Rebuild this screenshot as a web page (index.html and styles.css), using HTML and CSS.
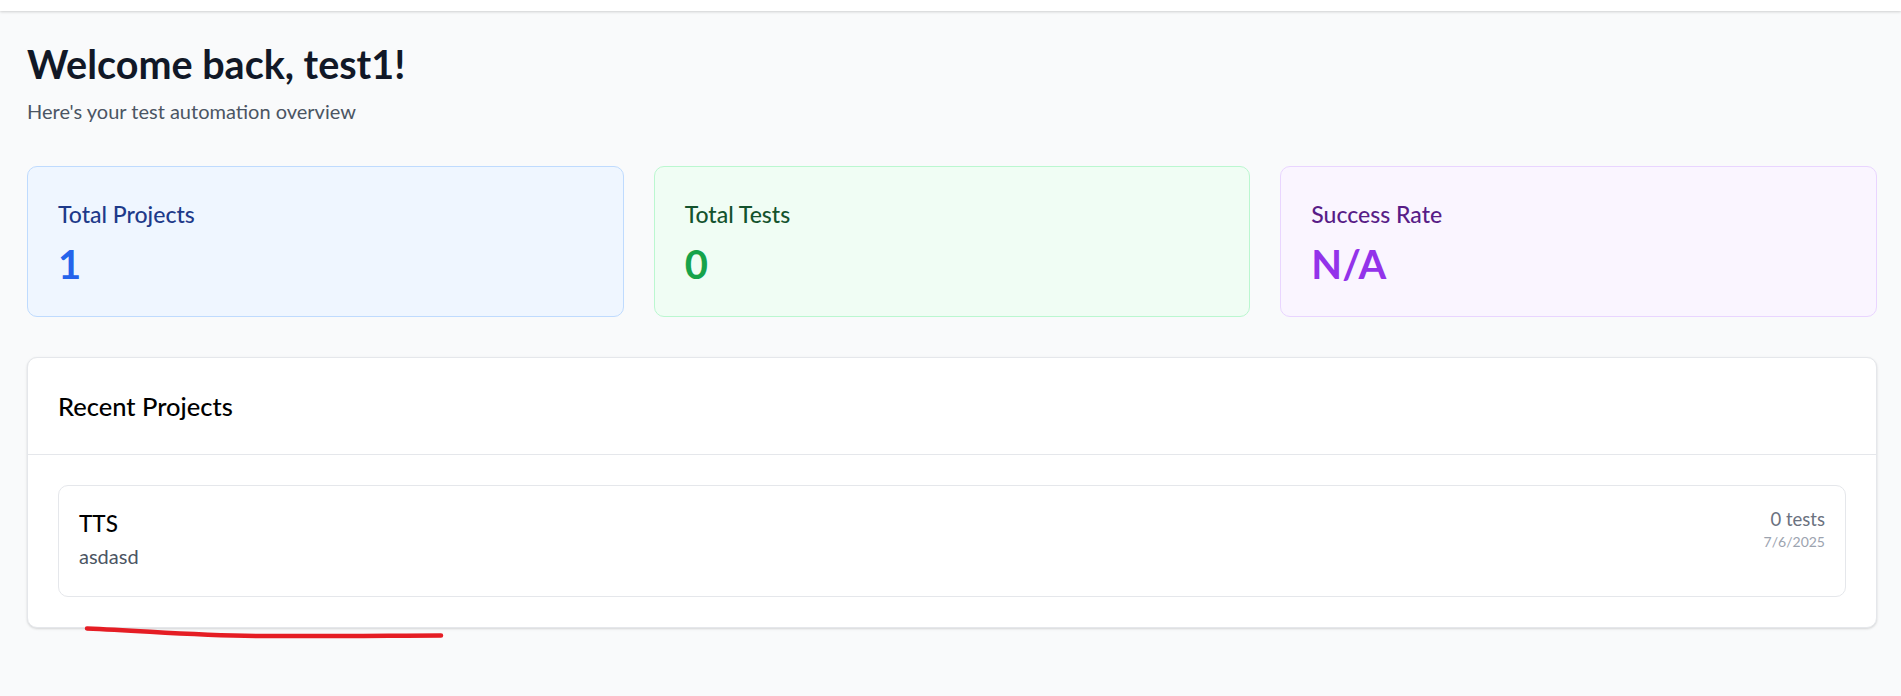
FILE: index.html
```html
<!DOCTYPE html>
<html lang="en">
<head>
<meta charset="utf-8">
<title>Dashboard</title>
<link rel="stylesheet" href="styles.css">
</head>
<body>
<header class="topbar"></header>
<main class="main">
  <section class="welcome">
    <h1 class="welcome-title">Welcome back, test1!</h1>
    <p class="welcome-sub">Here's your test automation overview</p>
  </section>
  <section class="stats">
    <div class="stat stat-blue">
      <div class="stat-label">Total Projects</div>
      <div class="stat-value">1</div>
    </div>
    <div class="stat stat-green">
      <div class="stat-label">Total Tests</div>
      <div class="stat-value">0</div>
    </div>
    <div class="stat stat-purple">
      <div class="stat-label">Success Rate</div>
      <div class="stat-value">N/A</div>
    </div>
  </section>
  <section class="panel">
    <div class="panel-head">
      <h2 class="panel-title">Recent Projects</h2>
    </div>
    <div class="panel-body">
      <div class="project">
        <div class="project-info">
          <div class="project-name">TTS</div>
          <div class="project-desc">asdasd</div>
        </div>
        <div class="project-meta">
          <div class="project-count">0 tests</div>
          <div class="project-date">7/6/2025</div>
        </div>
      </div>
    </div>
  </section>
</main>
<svg class="annotation" width="1901" height="696" viewBox="0 0 1901 696">
  <path d="M87 628.5 C 150 631, 190 635.5, 260 636 S 400 635.5, 441 635.5" fill="none" stroke="#e51d24" stroke-width="4.5" stroke-linecap="round"/>
</svg>
</body>
</html>
```
FILE: styles.css
```css
* { box-sizing: border-box; }
html, body { margin: 0; padding: 0; }
body {
  background: #f9fafb;
  font-family: Lato, "Noto Sans", "Liberation Sans", sans-serif;
  color: #111827;
  min-height: 696px;
  position: relative;
}
.topbar {
  height: 11px;
  background: #ffffff;
  box-shadow: 0 1px 3px rgba(0,0,0,0.12), 0 1px 2px rgba(0,0,0,0.06);
}
.main {
  padding: 30px 24px 30px 27px;
}
.welcome-title {
  margin: 0;
  font-size: 39.5px;
  line-height: 45px;
  font-weight: 700;
  color: #111827;
}
.welcome-sub {
  margin: 10px 0 0;
  font-size: 20px;
  line-height: 30px;
  color: #4b5563;
}
.stats {
  margin-top: 40px;
  display: grid;
  grid-template-columns: repeat(3, 1fr);
  gap: 30px;
}
.stat {
  border: 1px solid;
  border-radius: 10px;
  padding: 30px 30px 29px;
}
.stat-label {
  font-size: 23px;
  line-height: 35px;
  font-weight: 500;
}
.stat-value {
  margin-top: 10px;
  font-size: 40px;
  line-height: 45px;
  font-weight: 700;
}
.stat-blue { background: #eff6ff; border-color: #bfdbfe; }
.stat-blue .stat-label { color: #1e3a8a; }
.stat-blue .stat-value { color: #2563eb; }
.stat-green { background: #f0fdf4; border-color: #bbf7d0; }
.stat-green .stat-label { color: #14532d; }
.stat-green .stat-value { color: #16a34a; }
.stat-purple { background: #faf5ff; border-color: #e9d5ff; }
.stat-purple .stat-label { color: #581c87; }
.stat-purple .stat-value { color: #9333ea; }

.panel {
  margin-top: 40px;
  background: #ffffff;
  border: 1px solid #e5e7eb;
  border-radius: 10px;
  box-shadow: 0 1px 3px rgba(0,0,0,0.1), 0 1px 2px rgba(0,0,0,0.06);
}
.panel-head {
  padding: 31px 30px 30px;
  border-bottom: 1px solid #e5e7eb;
}
.panel-title {
  margin: 0;
  font-size: 25.5px;
  line-height: 35px;
  font-weight: 500;
  color: #000000;
}
.panel-body {
  padding: 30px;
}
.project {
  display: flex;
  justify-content: space-between;
  align-items: flex-start;
  border: 1px solid #e5e7eb;
  border-radius: 10px;
  padding: 23px 20px 25px;
}
.project-name {
  font-size: 22.5px;
  line-height: 30px;
  font-weight: 500;
  color: #000000;
}
.project-desc {
  margin-top: 2px;
  font-size: 20px;
  line-height: 30px;
  color: #4b5563;
}
.project-meta {
  margin-top: -2px;
  text-align: right;
}
.project-count {
  font-size: 18.5px;
  line-height: 25px;
  color: #6b7280;
}
.project-date {
  font-size: 14px;
  line-height: 20px;
  color: #9ca3af;
}
.annotation {
  position: absolute;
  left: 0;
  top: 0;
  pointer-events: none;
}
```
